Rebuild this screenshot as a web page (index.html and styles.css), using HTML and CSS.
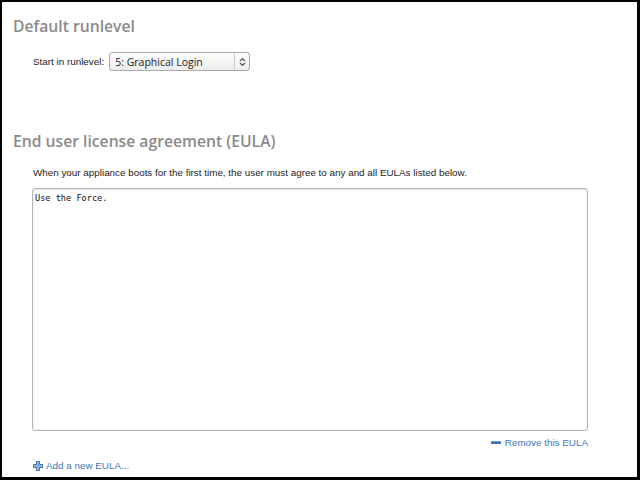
FILE: index.html
```html
<!DOCTYPE html>
<html>
<head>
<meta charset="utf-8">
<link rel="stylesheet" href="styles.css">
</head>
<body>
<div class="frame">
  <section class="section">
    <h2 class="heading">Default runlevel</h2>
    <div class="field">
      <label class="label">Start in runlevel:</label>
      <div class="select">
        <span class="select-text">5: Graphical Login</span>
        <span class="select-arrow">
          <svg width="7" height="10" viewBox="0 0 7 10"><path d="M1 4 L3.5 1.5 L6 4 M1 6 L3.5 8.5 L6 6" fill="none" stroke="#555" stroke-width="1.2"/></svg>
        </span>
      </div>
    </div>
  </section>
  <section class="section eula">
    <h2 class="heading">End user license agreement (EULA)</h2>
    <p class="desc">When your appliance boots for the first time, the user must agree to any and all EULAs listed below.</p>
    <div class="textarea">Use the Force.</div>
    <div class="remove-row">
      <a class="link">
        <svg class="icon" width="10" height="6" viewBox="0 0 10 6"><rect x="0" y="1" width="10" height="3" fill="#3e76b8"/><rect x="0" y="1" width="10" height="1" fill="#6d9bd2"/></svg>
        Remove this EULA
      </a>
    </div>
    <div class="add-row">
      <a class="link add">
        <svg class="icon" width="10" height="10" viewBox="0 0 10 10"><path d="M3.5 0.5 H6.5 V3.5 H9.5 V6.5 H6.5 V9.5 H3.5 V6.5 H0.5 V3.5 H3.5 Z" fill="#8fb0dc" stroke="#3e76b8" stroke-width="1"/></svg>
        Add a new EULA...
      </a>
    </div>
  </section>
</div>
</body>
</html>
```
FILE: styles.css
```css
html, body {
  margin: 0;
  padding: 0;
  background: #000;
}
.frame {
  box-sizing: border-box;
  width: 640px;
  height: 480px;
  background: #fff;
  border-style: solid;
  border-color: #000;
  border-width: 2px 3px 3px 2px;
  overflow: hidden;
  font-family: "Liberation Sans", Arial, sans-serif;
  font-size: 9.85px;
  color: #222;
}
.section {
  padding: 0 0 0 11px;
}
.heading {
  margin: 0;
  font-family: "Open Sans", sans-serif;
  font-weight: 600;
  font-size: 15.7px;
  color: #8a8a8a;
  line-height: 22px;
  padding-top: 13px;
}
.field {
  display: flex;
  align-items: center;
  margin: 15px 0 0 20px;
}
.label {
  margin-right: 5px;
}
.select {
  box-sizing: border-box;
  width: 141px;
  height: 19px;
  border: 1px solid #a9a9a9;
  border-radius: 3px;
  display: flex;
  align-items: center;
  background: linear-gradient(#fdfdfd, #ececec);
}
.select-text {
  flex: 1;
  padding-left: 5px;
  font-family: "Open Sans", sans-serif;
  font-size: 10.5px;
  color: #222;
}
.select-arrow {
  width: 14px;
  height: 100%;
  border-left: 1px solid #ccc;
  display: flex;
  align-items: center;
  justify-content: center;
}
.eula {
  margin-top: 59px;
}
.eula .heading {
  padding-top: 0;
}
.desc {
  margin: 14px 0 0 20px;
  line-height: 14px;
}
.textarea {
  box-sizing: border-box;
  margin: 8px 0 0 19px;
  width: 556px;
  height: 243px;
  border: 1px solid #b5b5b5;
  border-radius: 3px;
  box-shadow: inset 0 1px 2px rgba(0,0,0,0.12);
  padding: 3px 2px;
  font-family: "DejaVu Sans Mono", monospace;
  font-size: 8.6px;
  line-height: 13px;
  color: #111;
}
.remove-row {
  width: 575px;
  display: flex;
  justify-content: flex-end;
  margin-top: 5px;
}
.link {
  color: #3e76b8;
  display: inline-flex;
  align-items: center;
  gap: 4px;
  line-height: 14px;
}
.link.add {
  gap: 3px;
}
.add-row {
  margin: 9px 0 0 20px;
}
```
